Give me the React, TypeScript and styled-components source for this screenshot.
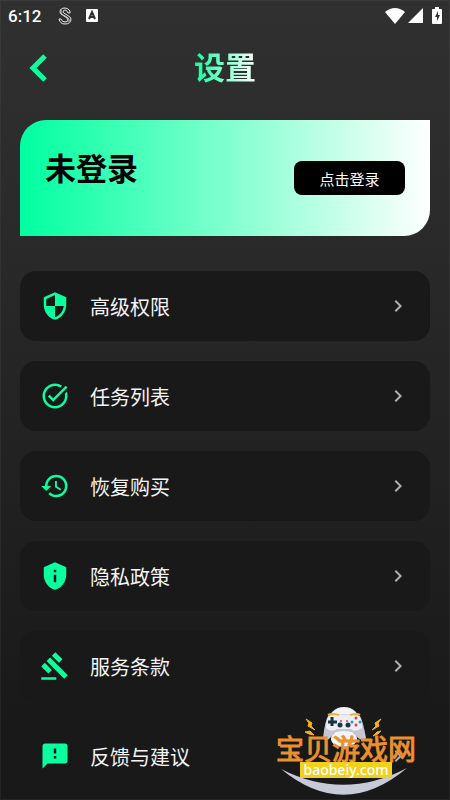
import React from "react";
import styled, { createGlobalStyle } from "styled-components";
import {
  MdChevronRight,
  MdFeedback,
  MdGavel,
  MdPrivacyTip,
  MdRestore,
  MdSecurity,
  MdTaskAlt,
} from "react-icons/md";

const GREEN = "#0cff9f";

const GlobalStyle = createGlobalStyle`
  * { box-sizing: border-box; }
  body {
    margin: 0;
    background: #191919;
    font-family: "Noto Sans CJK SC", sans-serif;
  }
  button { font: inherit; border: 0; padding: 0; cursor: pointer; }
`;

const Page = styled.div`
  position: relative;
  min-height: 100vh;
  background: linear-gradient(#303030, #2b2b2b 25%, #191919 90%);
  box-shadow: inset 0 0 0 1px rgba(255, 255, 255, 0.05);
`;

const StatusBar = styled.div`
  display: flex;
  align-items: center;
  height: 31px;
  padding: 0 8px;
  color: #fff;
`;

const Clock = styled.time`
  width: 50px;
  font: 500 17px/20px Roboto, sans-serif;
`;

const StatusIcons = styled.div<{ $end?: boolean }>`
  display: flex;
  align-items: center;
  gap: ${(p) => (p.$end ? 3 : 14)}px;
  margin-left: ${(p) => (p.$end ? "auto" : 0)};
  svg { display: block; }
  svg:last-child { margin-left: ${(p) => (p.$end ? 6 : 0)}px; }
`;

const Header = styled.header`
  display: grid;
  grid-template-columns: 36px 1fr 36px;
  align-items: center;
  height: 74px;
  padding: 0 20px;
`;

const BackButton = styled.button`
  display: grid;
  place-items: center;
  height: 36px;
  background: none;
`;

const Title = styled.h1`
  justify-self: center;
  margin: 0;
  padding-bottom: 4px;
  font-size: 31px;
  line-height: 44px;
  font-weight: 700;
  color: transparent;
  background: linear-gradient(90deg, ${GREEN}, #fff);
  background-clip: text;
`;

const Main = styled.main`
  padding: 15px 20px 9px;
`;

const AccountCard = styled.section`
  display: flex;
  justify-content: space-between;
  align-items: flex-start;
  height: 116px;
  padding: 25px;
  border-radius: 26px 0;
  background: linear-gradient(90deg, #00ffa0, #fff);
`;

const AccountName = styled.h2`
  margin: 0;
  font-size: 31px;
  line-height: 44px;
  font-weight: 700;
  color: #000;
`;

const LoginButton = styled.button`
  width: 111px;
  height: 34px;
  margin-top: 16px;
  border-radius: 8px;
  background: #000;
  color: #fff;
  && { font-size: 15px; }
`;

const Menu = styled.nav`
  display: flex;
  flex-direction: column;
  gap: 20px;
  margin-top: 35px;
`;

const MenuRow = styled.button`
  display: flex;
  align-items: center;
  height: 70px;
  padding: 0 20px;
  border-radius: 16px;
  background: #191919;
  color: ${GREEN};
`;

const MenuLabel = styled.span`
  flex: 1;
  margin-left: 20px;
  padding-top: 2px;
  text-align: left;
  font-size: 20px;
  line-height: 30px;
  color: #f4f4f4;
`;

const Watermark = styled.div`
  position: absolute;
  right: 32px;
  bottom: 0;
  width: 144px;
  height: 94px;
  pointer-events: none;
`;

const WatermarkArt = styled.svg`
  position: absolute;
  inset: 0;
`;

const WatermarkText = styled.div`
  position: relative;
  display: flex;
  flex-direction: column;
  align-items: center;
  padding-top: 28px;
`;

const WatermarkName = styled.span`
  font-size: 28px;
  line-height: 28px;
  font-weight: 400;
  white-space: nowrap;
  color: #ec9130;
  -webkit-text-stroke: 1px #e28a2c;
  paint-order: stroke fill;
`;

const WatermarkSite = styled.span`
  padding: 0 3px;
  background: #f0d21e;
  color: #fff;
  font: 500 14px/16px "Noto Sans", sans-serif;
`;

const items = [
  { label: "高级权限", Icon: MdSecurity },
  { label: "任务列表", Icon: MdTaskAlt },
  { label: "恢复购买", Icon: MdRestore },
  { label: "隐私政策", Icon: MdPrivacyTip },
  { label: "服务条款", Icon: MdGavel },
  { label: "反馈与建议", Icon: MdFeedback },
];

function Controller() {
  return (
    <WatermarkArt width="144" height="94" viewBox="0 0 144 94" aria-hidden="true">
      <path d="M7 63Q70 95 133 62Q70 115 7 63Z" fill="#c9cad8" />
      <ellipse cx="70" cy="16" rx="16" ry="15" fill="#f4f4f5" />
      <path d="M54 10Q70 6 86 10Q89 15 92 32Q89 37 83 31L78 26H62L57 31Q52 37 49 32Q51 15 54 10Z" fill="#c5c6d3" />
      <path d="M55 10Q70 7 85 10Q88 14 88 22Q80 27 77 23H63Q57 27 52 22Q52 14 55 10Z" fill="#eeeef2" />
      <ellipse cx="70" cy="33" rx="13" ry="8" fill="#f4f4f5" />
      <path d="M54 9Q58 7 65 9M76 9Q83 7 86 9" fill="none" stroke="#e7b63d" strokeWidth="2" />
      <path d="M58 11v9M54 16h9" stroke="#17333d" strokeWidth="3" />
      <g fill="#183a48"><circle cx="66" cy="19" r="2.5" /><circle cx="74" cy="19" r="2.5" /></g>
      <g fill="#db3c50"><circle cx="82" cy="12" r="1.5" /><circle cx="82" cy="19" r="1.5" /><circle cx="67" cy="15" r="1" /><circle cx="73" cy="15" r="1" /></g>
      <g fill="#2798b7"><circle cx="78" cy="16" r="1.5" /><circle cx="86" cy="16" r="1.5" /></g>
      <path d="M32 13L38 17L37 20L41 24L34 20L35 17ZM31 26L36 25L40 29L35 28ZM107 13L101 17L102 20L98 24L105 20L104 17ZM107 25L103 26L99 30L104 28Z" fill="#f3b218" stroke="#f3b218" />
    </WatermarkArt>
  );
}

export default function App() {
  return (
    <Page>
      <GlobalStyle />
      <StatusBar>
        <Clock>6:12</Clock>
        <StatusIcons>
          <svg width="14" height="18" viewBox="0 0 14 18" fill="none">
            <path d="M12 6V4Q10 1 7 1Q2 1 2 5Q2 7 6 9Q10 11 10 13Q10 15 7 15Q4 15 3 12H1Q2 17 7 17Q13 17 13 12Q13 10 9 8Q5 6 5 5Q5 3 7 3Q9 3 10 6Z" stroke="#e8e8e8" strokeWidth="1" />
            <path d="M3 3Q2 6 5 8L9 10Q12 12 11 15" stroke="#ccc" strokeWidth="1" />
          </svg>
          <svg width="12" height="13" viewBox="0 0 12 13">
            <rect width="12" height="13" rx="1" fill="#fff" />
            <path d="M3 10L6 3L9 10M4 8h4" fill="none" stroke="#303030" strokeWidth="2" />
          </svg>
        </StatusIcons>
        <StatusIcons $end>
          <svg width="20" height="16" viewBox="0 0 20 16"><path d="M0 4Q10 -4 20 4L10 16Z" fill="#fff" /></svg>
          <svg width="15" height="15" viewBox="0 0 15 15"><path d="M15 0V15H0Z" fill="#fff" /></svg>
          <svg width="10" height="17" viewBox="0 0 10 17">
            <path d="M3 0h4v2h2q1 0 1 1v13q0 1-1 1H1q-1 0-1-1V3q0-1 1-1h2Z" fill="#fff" />
            <path d="M6 4L3 10h2v4l3-6H6Z" fill="#303030" />
          </svg>
        </StatusIcons>
      </StatusBar>
      <Header>
        <BackButton aria-label="返回">
          <svg width="18" height="28" viewBox="0 0 18 28"><path d="M16 2L4 14L16 26" fill="none" stroke={GREEN} strokeWidth="5" /></svg>
        </BackButton>
        <Title>设置</Title>
      </Header>
      <Main>
        <AccountCard>
          <AccountName>未登录</AccountName>
          <LoginButton>点击登录</LoginButton>
        </AccountCard>
        <Menu>
          {items.map(({ label, Icon }) => (
            <MenuRow key={label}>
              <Icon size={30} />
              <MenuLabel>{label}</MenuLabel>
              <MdChevronRight size={24} color="#b0b0b0" />
            </MenuRow>
          ))}
        </Menu>
      </Main>
      <Watermark>
        <Controller />
        <WatermarkText>
          <WatermarkName>宝贝游戏网</WatermarkName>
          <WatermarkSite>baobeiy.com</WatermarkSite>
        </WatermarkText>
      </Watermark>
    </Page>
  );
}
